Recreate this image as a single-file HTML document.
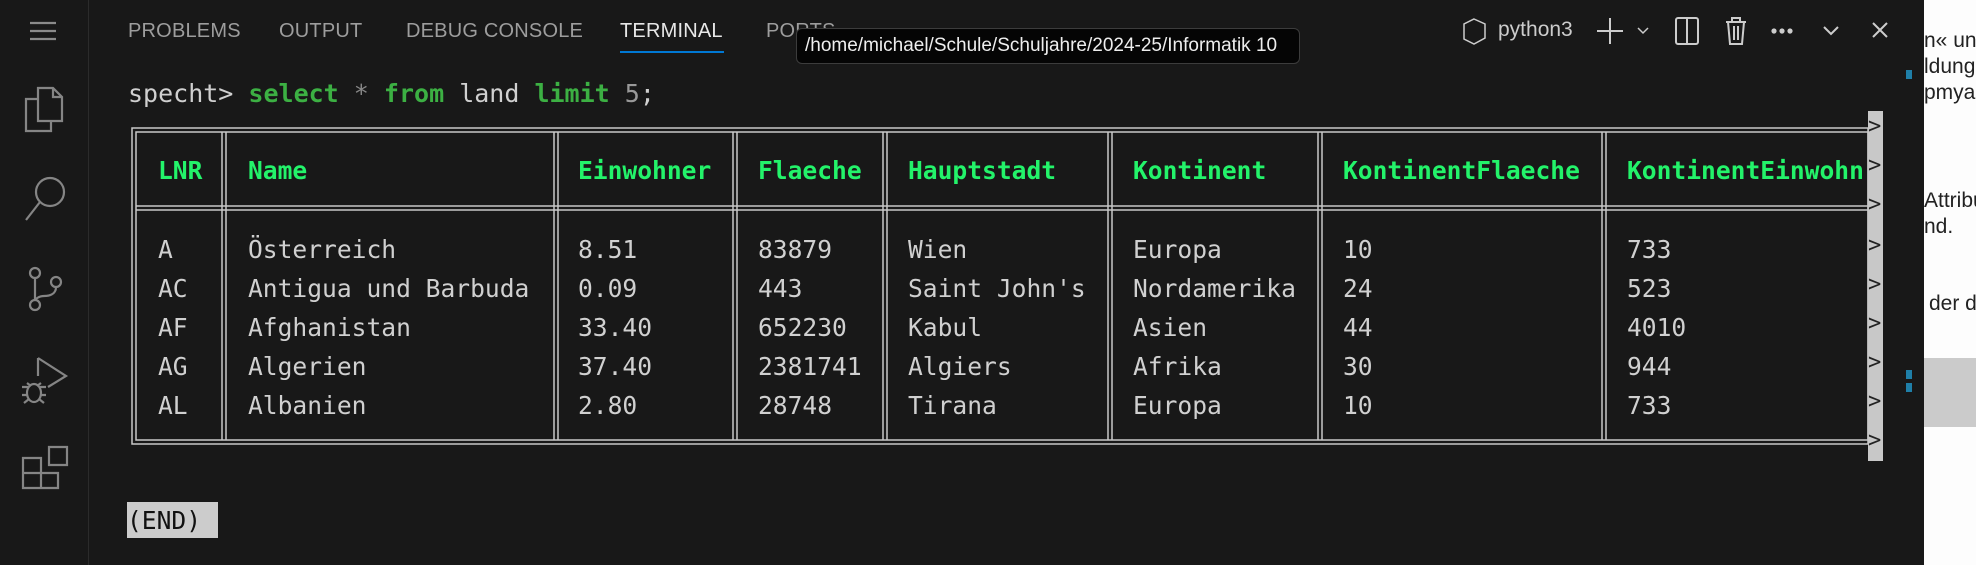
<!DOCTYPE html>
<html><head><meta charset="utf-8"><style>
*{margin:0;padding:0;box-sizing:border-box}
body{width:1976px;height:565px;background:#181818;overflow:hidden;position:relative;font-family:"Liberation Sans","DejaVu Sans",sans-serif}
.abs{position:absolute}
.tab{position:absolute;top:20px;font-size:20px;color:#9d9d9d;letter-spacing:0.2px}
.mono{font-family:"DejaVu Sans Mono","Liberation Mono",monospace;font-size:24.6px;color:#d0d0d0;white-space:pre}
.hd{color:#23f36a;font-weight:bold}
.rp{position:absolute;left:1924px;font-size:21px;color:#222;white-space:nowrap}
.chev{position:absolute;left:1868px;font-family:"DejaVu Sans Mono",monospace;font-size:22px;color:#222}
</style></head><body>
<div class="abs" style="left:0;top:0;width:89px;height:565px;background:#181818;border-right:1px solid #2b2b2b"></div>
<svg class="abs" style="left:0;top:0" width="89" height="565" fill="none" stroke="#858585" stroke-width="2.2">
<path d="M30 23h26M30 31h26M30 39h26" stroke="#8a8a8a"/>
<path d="M38 88h15l9 9v24H38z M53 88v9h9"/>
<path d="M38 99h-12v32h25v-10"/>
<circle cx="50" cy="192" r="14"/><path d="M40 202l-14 18"/>
<circle cx="35" cy="273" r="5"/><circle cx="35" cy="305" r="5"/><circle cx="56" cy="282" r="5"/>
<path d="M35 278v22M56 287c0 8-8 9-12 9c-5 0-9 3-9 5"/>
<path d="M38 358l28 18l-18 11M38 358v18"/>
<ellipse cx="34" cy="393" rx="7" ry="9"/><path d="M22 387h6M22 395h6M40 387h6M40 395h6M24 403l5-4M44 403l-5-4M27 383l4 3M41 383l-4 3"/>
<path d="M23 458h18v30H23z M23 473h35v15H41 M49 447h18v18H49z"/>
</svg>
<div class="tab" style="left:128px">PROBLEMS</div>
<div class="tab" style="left:279px">OUTPUT</div>
<div class="tab" style="left:406px">DEBUG CONSOLE</div>
<div class="tab" style="left:620px;color:#e7e7e7">TERMINAL</div>
<div class="abs" style="left:620px;top:51px;width:104px;height:2px;background:#0078d4"></div>
<div class="tab" style="left:766px">PORTS</div>
<div class="abs" style="left:796px;top:28px;width:504px;height:36px;background:#050505;border:1px solid #3c3c3c;border-radius:6px;color:#eee;font-size:19px;padding:6px 8px;white-space:nowrap">/home/michael/Schule/Schuljahre/2024-25/Informatik 10</div>
<svg class="abs" style="left:1460px;top:12px" width="440" height="40" fill="none" stroke="#cccccc" stroke-width="2">
<path d="M14 7l11 5v14l-11 6l-10-5V12z" stroke-width="1.5"/>
<path d="M150 6v26M137 19h26"/><path d="M178 16l5 5l5-5" stroke-width="1.5"/>
<rect x="216" y="6" width="22" height="26" rx="2"/><path d="M227 6v26"/>
<path d="M266 10h20M272 10V6h8v4M268 10l2 22h12l2-22M274 14v14M278 14v14"/>
<circle cx="314" cy="19" r="1.6" fill="#ccc"/><circle cx="322" cy="19" r="1.6" fill="#ccc"/><circle cx="330" cy="19" r="1.6" fill="#ccc"/>
<path d="M364 15l7 7l7-7"/><path d="M413 11l14 14M427 11l-14 14"/>
</svg>
<div class="abs" style="left:1498px;top:18px;font-size:21px;color:#ccc">python3</div>
<div class="abs mono" style="left:128px;top:79px;font-size:25px">specht&gt; <b style="color:#3cb043">select</b> <span style="color:#888">*</span> <b style="color:#3cb043">from</b> land <b style="color:#3cb043">limit</b> <span style="color:#999">5</span>;</div>
<svg class="abs" style="left:0;top:0" width="1976" height="565" fill="none" stroke="#c8c8c8" stroke-width="1.5">
<rect x="132" y="128" width="1736" height="316"/>
<rect x="136" y="132" width="1732" height="308"/>
<path d="M136 206h1732M136 210h1732"/>
<path d="M222 132v308M226 132v308M554 132v308M558 132v308M733 132v308M737 132v308M883 132v308M887 132v308M1108 132v308M1112 132v308M1318 132v308M1322 132v308M1602 132v308M1606 132v308"/>
</svg>
<div class="abs mono hd" style="left:158px;top:156px">LNR</div>
<div class="abs mono hd" style="left:248px;top:156px">Name</div>
<div class="abs mono hd" style="left:578px;top:156px">Einwohner</div>
<div class="abs mono hd" style="left:758px;top:156px">Flaeche</div>
<div class="abs mono hd" style="left:908px;top:156px">Hauptstadt</div>
<div class="abs mono hd" style="left:1133px;top:156px">Kontinent</div>
<div class="abs mono hd" style="left:1343px;top:156px">KontinentFlaeche</div>
<div class="abs mono hd" style="left:1627px;top:156px;width:241px;overflow:hidden">KontinentEinwohn</div>
<div class="abs mono" style="left:158px;top:230px;line-height:39px">A
AC
AF
AG
AL</div>
<div class="abs mono" style="left:248px;top:230px;line-height:39px">Österreich
Antigua und Barbuda
Afghanistan
Algerien
Albanien</div>
<div class="abs mono" style="left:578px;top:230px;line-height:39px">8.51
0.09
33.40
37.40
2.80</div>
<div class="abs mono" style="left:758px;top:230px;line-height:39px">83879
443
652230
2381741
28748</div>
<div class="abs mono" style="left:908px;top:230px;line-height:39px">Wien
Saint John's
Kabul
Algiers
Tirana</div>
<div class="abs mono" style="left:1133px;top:230px;line-height:39px">Europa
Nordamerika
Asien
Afrika
Europa</div>
<div class="abs mono" style="left:1343px;top:230px;line-height:39px">10
24
44
30
10</div>
<div class="abs mono" style="left:1627px;top:230px;line-height:39px">733
523
4010
944
733</div>
<div class="abs" style="left:1868px;top:111px;width:15px;height:350px;background:#c8c8c8"></div>
<div class="chev" style="top:114px">&gt;</div><div class="chev" style="top:153px">&gt;</div><div class="chev" style="top:192px">&gt;</div><div class="chev" style="top:233px">&gt;</div><div class="chev" style="top:272px">&gt;</div><div class="chev" style="top:311px">&gt;</div><div class="chev" style="top:350px">&gt;</div><div class="chev" style="top:389px">&gt;</div><div class="chev" style="top:428px">&gt;</div>
<div class="abs mono" style="left:127px;top:502px;width:91px;height:36px;background:#cccccc;color:#111;padding-top:4px">(END)</div>
<div class="abs" style="left:1924px;top:0;width:52px;height:565px;background:#fdfdfd"></div>
<div class="abs" style="left:1924px;top:358px;width:52px;height:69px;background:#cbcbcb"></div>
<div class="abs" style="left:1906px;top:70px;width:6px;height:9px;background:#1f7fa8"></div>
<div class="abs" style="left:1906px;top:370px;width:6px;height:9px;background:#1f7fa8"></div>
<div class="abs" style="left:1906px;top:383px;width:6px;height:9px;background:#1f7fa8"></div>
<div class="rp" style="top:29px">n« und</div>
<div class="rp" style="top:55px">ldung</div>
<div class="rp" style="top:81px">pmyac</div>
<div class="rp" style="top:189px">Attribu</div>
<div class="rp" style="top:215px">nd.</div>
<div class="rp" style="top:292px;left:1929px">der da</div>
</body></html>
